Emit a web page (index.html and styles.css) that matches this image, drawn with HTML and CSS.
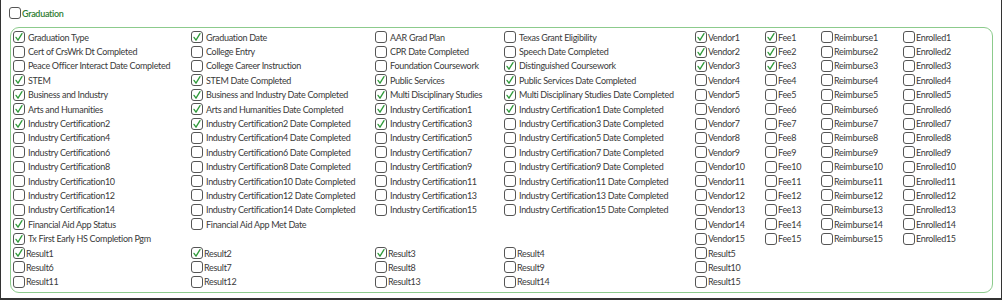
FILE: index.html
```html
<!DOCTYPE html>
<html lang="en">
<head>
  <meta charset="UTF-8" />
  <title>Graduation Fields</title>
  <link rel="stylesheet" href="styles.css">
</head>
<body>
  <div class="page">
    <label class="group-title">
      <span class="box"></span>Graduation
    </label>

    <div class="group">
      <div id="fields" class="fields"></div>
    </div>
  </div>

  <script>
    // "*" at the end of a label means the box is checked
    const rows = [
      ["Graduation Type*", "Graduation Date*", "AAR Grad Plan", "Texas Grant Eligibility", "Vendor1*", "Fee1*", "Reimburse1", "Enrolled1"],
      ["Cert of CrsWrk Dt Completed", "College Entry", "CPR Date Completed", "Speech Date Completed", "Vendor2*", "Fee2*", "Reimburse2", "Enrolled2"],
      ["Peace Officer Interact Date Completed", "College Career Instruction", "Foundation Coursework", "Distinguished Coursework*", "Vendor3*", "Fee3*", "Reimburse3", "Enrolled3"],
      ["STEM*", "STEM Date Completed*", "Public Services*", "Public Services Date Completed*", "Vendor4", "Fee4", "Reimburse4", "Enrolled4"],
      ["Business and Industry*", "Business and Industry Date Completed*", "Multi Disciplinary Studies*", "Multi Disciplinary Studies Date Completed*", "Vendor5", "Fee5", "Reimburse5", "Enrolled5"],
      ["Arts and Humanities*", "Arts and Humanities Date Completed*", "Industry Certification1*", "Industry Certification1 Date Completed*", "Vendor6", "Fee6", "Reimburse6", "Enrolled6"],
      ["Industry Certification2*", "Industry Certification2 Date Completed*", "Industry Certification3*", "Industry Certification3 Date Completed", "Vendor7", "Fee7", "Reimburse7", "Enrolled7"],
      ["Industry Certification4", "Industry Certification4 Date Completed", "Industry Certification5", "Industry Certification5 Date Completed", "Vendor8", "Fee8", "Reimburse8", "Enrolled8"],
      ["Industry Certification6", "Industry Certification6 Date Completed", "Industry Certification7", "Industry Certification7 Date Completed", "Vendor9", "Fee9", "Reimburse9", "Enrolled9"],
      ["Industry Certification8", "Industry Certification8 Date Completed", "Industry Certification9", "Industry Certification9 Date Completed", "Vendor10", "Fee10", "Reimburse10", "Enrolled10"],
      ["Industry Certification10", "Industry Certification10 Date Completed", "Industry Certification11", "Industry Certification11 Date Completed", "Vendor11", "Fee11", "Reimburse11", "Enrolled11"],
      ["Industry Certification12", "Industry Certification12 Date Completed", "Industry Certification13", "Industry Certification13 Date Completed", "Vendor12", "Fee12", "Reimburse12", "Enrolled12"],
      ["Industry Certification14", "Industry Certification14 Date Completed", "Industry Certification15", "Industry Certification15 Date Completed", "Vendor13", "Fee13", "Reimburse13", "Enrolled13"],
      ["Financial Aid App Status*", "Financial Aid App Met Date", "", "", "Vendor14", "Fee14", "Reimburse14", "Enrolled14"],
      ["Tx First Early HS Completion Pgm*", "", "", "", "Vendor15", "Fee15", "Reimburse15", "Enrolled15"]
    ];

    const results = [
      ["Result1*", "Result2*", "Result3*", "Result4", "Result5"],
      ["Result6", "Result7", "Result8", "Result9", "Result10"],
      ["Result11", "Result12", "Result13", "Result14", "Result15"]
    ];

    const check = '<svg viewBox="0 0 12 12" width="12" height="12"><polyline points="3,6.4 5,9.2 9,2.6" fill="none" stroke="#2f9a3a" stroke-width="1.3" stroke-linecap="round" stroke-linejoin="round"/></svg>';

    function cell(text, tight) {
      const div = document.createElement("div");
      div.className = "cell";
      if (!text) return div;
      const checked = text.endsWith("*");
      const label = checked ? text.slice(0, -1) : text;
      div.innerHTML = `<label class="item${tight ? " tight" : ""}"><span class="box">${checked ? check : ""}</span>${label}</label>`;
      return div;
    }

    const container = document.getElementById("fields");
    rows.forEach(r => {
      r.forEach((t, i) => container.appendChild(cell(t, i > 3)));
    });
    results.forEach(r => {
      r.forEach(t => container.appendChild(cell(t, true)));
      for (let i = 0; i < 3; i++) container.appendChild(cell("", true));
    });
  </script>
</body>
</html>
```

FILE: styles.css
```css
body {
  margin: 0;
  font-family: Lato, "Open Sans", sans-serif;
  font-size: 9px;
  letter-spacing: -0.3px;
  color: #3a3a3a;
  background: #fff;
}
.page {
  box-sizing: border-box;
  width: 1002px;
  height: 300px;
  padding: 7px 9px 0 9px;
  border-left: 1px solid #333;
  border-right: 1px solid #333;
  border-bottom: 2px solid #333;
}
.group-title {
  display: flex;
  align-items: center;
  height: 12px;
  margin-left: -1px;
  color: #2e7d32;
  font-weight: 600;
}
.group-title .box { margin-right: 1px; }
.group {
  margin-top: 8px;
  width: 983px;
  box-sizing: border-box;
  height: 266px;
  padding: 2px 0 0 2px;
  border: 1.5px solid #8ccb8c;
  border-radius: 9px;
}
.fields {
  display: grid;
  grid-template-columns: 178px 184px 129px 191px 70px 56px 82px auto;
  grid-auto-rows: 14.4px;
}
.cell {
  display: flex;
  align-items: center;
  white-space: nowrap;
}
.item {
  display: flex;
  align-items: center;
  gap: 3px;
}
.item.tight { gap: 1px; }
.box {
  box-sizing: border-box;
  width: 12px;
  height: 12px;
  border: 1px solid #555;
  border-radius: 3px;
  background: #fff;
  display: inline-flex;
  flex: none;
}
.box svg { margin: -1px; }
```
